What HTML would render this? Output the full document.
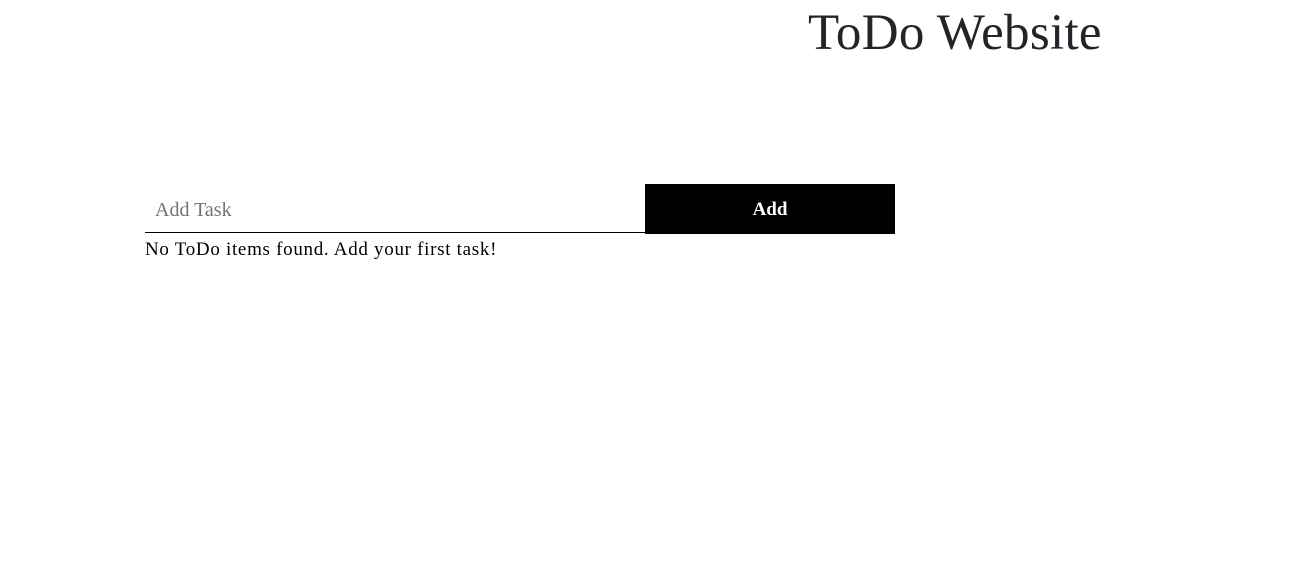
<!DOCTYPE html>
<html><head><meta charset="utf-8"><style>
html,body{margin:0;padding:0;background:#fff;width:1294px;height:572px;overflow:hidden;font-family:"Liberation Serif",serif;color:#212529}
h1{position:absolute;left:808px;top:3px;margin:0;font-weight:400;font-size:51px;line-height:60px;white-space:nowrap;letter-spacing:0.3px}
.inp{position:absolute;left:145px;top:184px;width:500px;height:48px;border-bottom:1px solid #000;box-sizing:content-box}
.inp span{position:absolute;left:10px;top:15px;font-size:20px;color:#6c757d}
.btn{position:absolute;left:645px;top:184px;width:250px;height:50px;background:#000;color:#fff;font-weight:700;font-size:19px;text-align:center;line-height:52px}
.msg{position:absolute;left:145px;top:239px;font-size:19px;color:#000;white-space:nowrap;letter-spacing:0.7px}
</style></head><body>
<h1>ToDo Website</h1>
<div class="inp"><span>Add Task</span></div>
<div class="btn">Add</div>
<div class="msg">No ToDo items found. Add your first task!</div>
</body></html>
